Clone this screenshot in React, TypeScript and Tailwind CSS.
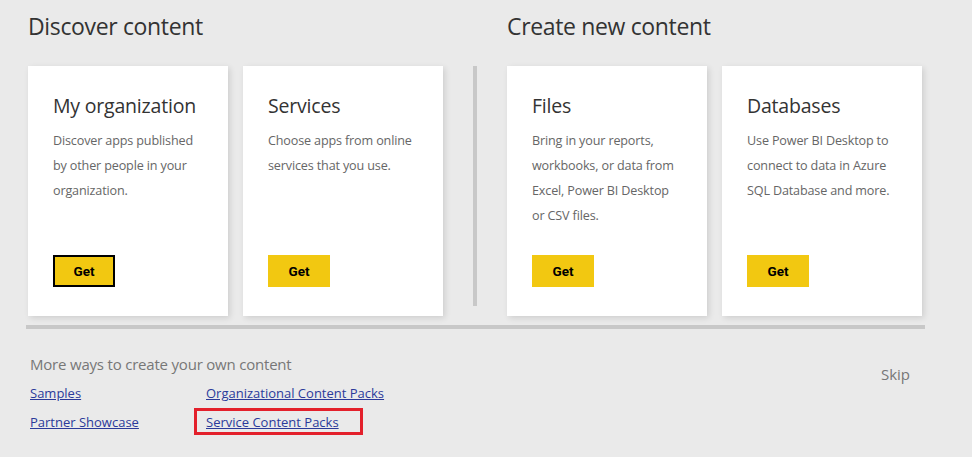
import React from "react";

const cards1 = [
  { title: "My organization", desc: "Discover apps published by other people in your organization.", focus: true },
  { title: "Services", desc: "Choose apps from online services that you use.", focus: false },
];
const cards2 = [
  { title: "Files", desc: "Bring in your reports, workbooks, or data from Excel, Power BI Desktop or CSV files.", focus: false },
  { title: "Databases", desc: "Use Power BI Desktop to connect to data in Azure SQL Database and more.", focus: false },
];

function Card({ title, desc, focus }: { title: string; desc: string; focus: boolean }) {
  return (
    <div className="flex h-[250px] w-[200px] flex-col bg-white px-[25px] pt-[26px] pb-[29px] shadow-[2px_2px_6px_rgba(0,0,0,0.12)]">
      <div className="text-[19.5px] leading-[28px] tracking-[-0.2px] text-[#333]">{title}</div>
      <div className="mt-[8px] text-[12.6px] leading-[25px] tracking-[-0.15px] text-[#666]">{desc}</div>
      <div className="mt-auto">
        <button
          className={
            "h-[32px] w-[62px] bg-[#f2c811] text-[13.5px] font-bold text-black [font-family:Roboto,sans-serif] " +
            (focus ? "border-2 border-black" : "")
          }
        >
          Get
        </button>
      </div>
    </div>
  );
}

function Section({ title, cards }: { title: string; cards: typeof cards1 }) {
  return (
    <div className="flex flex-col">
      <div className="mt-[10px] text-[23px] leading-[32px] tracking-[-0.35px] text-[#333]">{title}</div>
      <div className="mt-[24px] flex gap-[15px]">
        {cards.map((c) => (
          <Card key={c.title} {...c} />
        ))}
      </div>
    </div>
  );
}

export default function App() {
  return (
    <div className="h-[457px] w-[972px] overflow-hidden bg-[#eaeaea] [font-family:'Open_Sans',sans-serif]">
      <div className="flex pl-[28px]">
        <Section title="Discover content" cards={cards1} />
        <div className="mx-[30px] mt-[66px] h-[240px] w-[4px] bg-[#c8c8c8]" />
        <Section title="Create new content" cards={cards2} />
      </div>
      <div className="ml-[26px] mt-[9px] h-[4px] w-[899px] bg-[#c8c8c8]" />
      <div className="flex pl-[30px] pr-[62px]">
        <div className="flex flex-col">
          <div className="mt-[24px] text-[15px] leading-[22px] tracking-[-0.2px] text-[#777]">More ways to create your own content</div>
          <div className="mt-[9px] grid grid-cols-[176px_auto] gap-y-[11px] text-[13px] leading-[18px] text-[#2b3a9a]">
            <a className="underline">Samples</a>
            <a className="underline">Organizational Content Packs</a>
            <a className="underline">Partner Showcase</a>
            <div className="relative">
              <a className="underline">Service Content Packs</a>
              <div className="pointer-events-none absolute left-[-12px] top-[-5px] h-[27px] w-[169px] border-[3px] border-[#e3202b]" />
            </div>
          </div>
        </div>
        <div className="ml-auto mt-[35px] text-[15px] leading-[20px] text-[#777]">Skip</div>
      </div>
    </div>
  );
}
